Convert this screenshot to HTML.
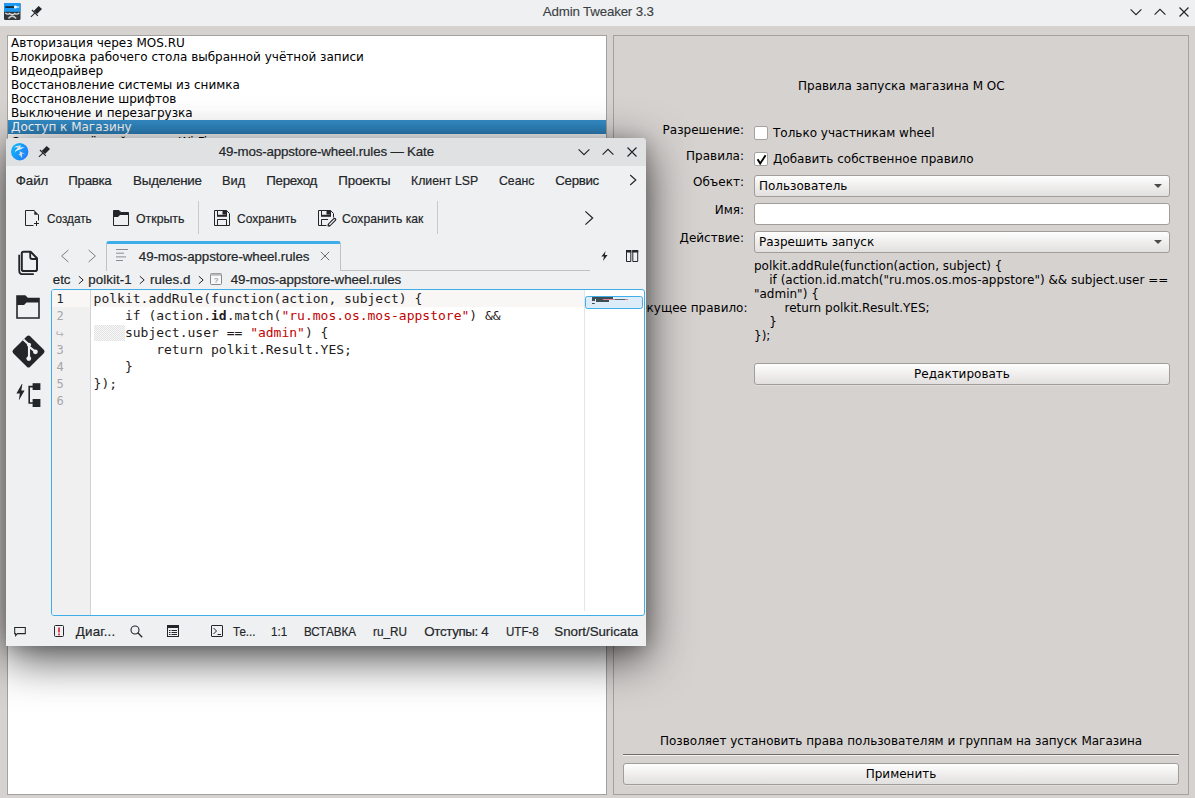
<!DOCTYPE html>
<html lang="ru"><head><meta charset="utf-8"><title>Admin Tweaker 3.3</title>
<style>
html,body{margin:0;padding:0}
body{width:1195px;height:798px;overflow:hidden;position:relative;background:#d6d2d0;font-family:"DejaVu Sans", "Liberation Sans", sans-serif;font-size:12px;line-height:14px;color:#000}
div,span{box-sizing:border-box}
.abs{position:absolute}
.k{position:absolute;white-space:nowrap;font-family:"Liberation Sans", "DejaVu Sans", sans-serif;font-size:13.33px;line-height:16px;color:#232629;-webkit-text-stroke:0.2px #232629}
.d{position:absolute;white-space:nowrap;font-family:"DejaVu Sans", "Liberation Sans", sans-serif;font-size:12px;line-height:14px;color:#000}
#mtitle{position:absolute;left:0;top:0;width:1195px;height:26px;background:#eff0f1}
#list{position:absolute;left:7px;top:35px;width:600px;height:760px;background:#fff;border:1px solid #a5a19e;overflow:hidden}
#list .row{position:absolute;left:0;width:598px;height:14px;padding-left:3px;white-space:nowrap}
#list .sel{background:linear-gradient(#358fca,#2e83bd);color:#fff}
#panel{position:absolute;left:613px;top:35px;width:576px;height:760px;border:1px solid #a5a19e}
.btn{position:absolute;height:22px;border:1px solid #a19d9a;border-radius:3px;background:linear-gradient(#fefefe,#f1f0ef 45%,#e2e0de);text-align:center;line-height:20px;box-shadow:0 1px 0 rgba(255,255,255,.25)}
.combo{position:absolute;height:22px;border:1px solid #a19d9a;border-radius:3px;background:linear-gradient(#fefefe,#f1f0ef 45%,#e2e0de);line-height:20px;padding-left:4px}
.combo:after{content:"";position:absolute;right:7px;top:8px;border-left:4px solid transparent;border-right:4px solid transparent;border-top:4px solid #4a4a4a}
.edit{position:absolute;height:22px;border:1px solid #a19d9a;border-radius:3px;background:#fff}
.chk{position:absolute;width:14px;height:14px;border:1px solid #a6a29f;border-radius:2px;background:#fff}
#kate{position:absolute;left:6px;top:138px;width:640px;height:508px;background:#eff0f1;border-radius:4px 4px 0 0;box-shadow:0 12px 46px 0 rgba(0,0,0,.72), 0 2px 16px rgba(0,0,0,.16)}
#ktitle{position:absolute;left:0;top:0;width:640px;height:28px;background:#dfe1e3;border-radius:4px 4px 0 0}
#editor{position:absolute;left:45px;top:151px;width:594px;height:327px;border:1px solid #3daee9;border-radius:3px;background:#fff;overflow:hidden}
.ln{position:absolute;left:4.5px;font-family:"DejaVu Sans Mono", "Liberation Mono", monospace;font-size:12px;line-height:17px;color:#a5a6a8}
.code{position:absolute;left:41.6px;white-space:pre;font-family:"DejaVu Sans Mono", "Liberation Mono", monospace;font-size:13px;line-height:17px;color:#1f1c1b}
.code b{font-weight:bold}
.code i{font-style:normal;color:#bf0303}
svg{position:absolute;overflow:visible}
</style></head><body>

<div id="mtitle">
<svg style="left:4px;top:3.2px" width="16.5" height="17" viewBox="0 0 16.5 17">
<rect x="0" y="0" width="16.5" height="17" rx="1.2" fill="#31363b"/>
<path d="M1.2 0 H15.3 Q16.5 0 16.5 1.2 V8.8 H0 V1.2 Q0 0 1.2 0Z" fill="#1d99f3"/>
<rect x="1.2" y="3.3" width="9" height="1.5" fill="#101418"/>
<circle cx="11.4" cy="4" r="1.5" fill="#fcfcfc"/><rect x="11.4" y="3.5" width="3.8" height="1.1" fill="#fcfcfc"/>
<path d="M1.3 9.8 Q3.2 12.2 5.6 10.4 Q8.2 12.6 10.9 10.4 Q13.3 12.2 15.2 9.8" fill="none" stroke="#dfe2e4" stroke-width="1.3"/>
<path d="M4.4 15.6 Q8.2 10.6 12.1 15.6" fill="none" stroke="#c9cdd0" stroke-width="1.6"/>
</svg>
<svg style="left:30px;top:5px" width="13" height="13" viewBox="0 0 13 13"><path d="M8.7 1.0 L12 4 L7.0 9.0 L3.7 6.0 Z" fill="#232629"/><path d="M1.9 5 L7.9 10.8 M5.4 7.6 L0.9 11.8" stroke="#232629" stroke-width="1.1" fill="none"/></svg>
<span class="k" id="k0" style="left:542.8px;top:3.9px;letter-spacing:-0.175px;color:#3a3e42;-webkit-text-stroke:0.1px #3a3e42">Admin Tweaker 3.3</span>
<svg style="left:1136px;top:12px" width="1" height="1"><path d="M-5.4 -2.7 L0 2.7 L5.4 -2.7" fill="none" stroke="#232629" stroke-width="1.15"/></svg>
<svg style="left:1160px;top:12px" width="1" height="1"><path d="M-5.4 2.7 L0 -2.7 L5.4 2.7" fill="none" stroke="#232629" stroke-width="1.15"/></svg>
<svg style="left:1184px;top:12px" width="1" height="1"><path d="M-4.5 -4.5 L4.5 4.5 M4.5 -4.5 L-4.5 4.5" fill="none" stroke="#232629" stroke-width="1.15"/></svg>
</div>
<div id="list">
<div class="row" style="top:0px">Авторизация через MOS.RU</div>
<div class="row" style="top:14px">Блокировка рабочего стола выбранной учётной записи</div>
<div class="row" style="top:28px">Видеодрайвер</div>
<div class="row" style="top:42px">Восстановление системы из снимка</div>
<div class="row" style="top:56px">Восстановление шрифтов</div>
<div class="row" style="top:70px">Выключение и перезагрузка</div>
<div class="row sel" style="top:84px">Доступ к Магазину</div>
<div class="row" style="top:99px">Создание учётной записи Wi-Fi</div>
</div>
<div id="panel"></div>
<div class="d" style="left:798px;top:79px;">Правила запуска магазина М ОС</div>
<div class="d" style="right:451px;top:123px;">Разрешение:</div>
<div class="d" style="right:451px;top:149px;">Правила:</div>
<div class="d" style="right:451px;top:175px;">Объект:</div>
<div class="d" style="right:451px;top:203px;">Имя:</div>
<div class="d" style="right:451px;top:231px;">Действие:</div>
<div class="d" style="right:447.5px;top:301px;">Текущее правило:</div>
<div class="chk" style="left:754px;top:126px"></div>
<div class="d" style="left:773px;top:126px;">Только участникам wheel</div>
<div class="chk" style="left:754px;top:152px"><svg style="left:1px;top:1px" width="11" height="11" viewBox="0 0 11 11"><path d="M1.6 5.2 L4.2 9.4 L9.6 1.2" fill="none" stroke="#000" stroke-width="1.9"/></svg></div>
<div class="d" style="left:773px;top:152px;">Добавить собственное правило</div>
<div class="combo" style="left:754px;top:175px;width:416px">Пользователь</div>
<div class="edit" style="left:754px;top:203px;width:416px"></div>
<div class="combo" style="left:754px;top:231px;width:416px">Разрешить запуск</div>
<div class="d" style="left:754px;top:259px;white-space:pre">polkit.addRule(function(action, subject) {
    if (action.id.match("ru.mos.os.mos-appstore") &amp;&amp; subject.user ==
"admin") {
        return polkit.Result.YES;
    }
});</div>
<div class="btn" style="left:754px;top:363px;width:416px">Редактировать</div>
<div class="d" style="left:660px;top:734px;">Позволяет установить права пользователям и группам на запуск Магазина</div>
<div class="abs" style="left:623px;top:754px;width:556px;height:1px;background:#6f6c6a"></div>
<div class="abs" style="left:623px;top:755px;width:556px;height:1px;background:#f4f2f1"></div>
<div class="btn" style="left:623px;top:763px;width:556px">Применить</div>
<div id="kate">
<div id="ktitle"></div>
<svg style="left:5.050000000000001px;top:5.199999999999989px" width="17.4" height="17.4" viewBox="0 0 17.4 17.4">
<defs><linearGradient id="kg" x1="0" y1="0.2" x2="1" y2="0.8"><stop offset="0" stop-color="#0cb8f9"/><stop offset="1" stop-color="#2179fb"/></linearGradient></defs>
<circle cx="8.7" cy="8.7" r="8.7" fill="url(#kg)"/>
<path d="M2.7 4.2 Q6 2.2 10.1 2.4 L8.8 4.4 L13.7 4.1 Q9.5 6.9 5.8 7.7 Q4.4 8.4 3.8 9.7 Q3.5 7.4 6.4 5.6 Q7 4.7 7 4.3 Z" fill="#eef1f3"/>
<path d="M6.2 3.4 L8.6 3.2 L7.8 5 L6.6 5.4 Z" fill="#c9cdd1"/>
<path d="M8.6 8.0 L14.6 11.4 L11 10.6 L11.2 15.2 L9.2 12.4 L7.4 11.8 L9 10.6 Z" fill="#d9dde0"/>
</svg>
<svg style="left:32.3px;top:7.099999999999994px" width="13" height="13" viewBox="0 0 13 13"><path d="M8.7 1.0 L12 4 L7.0 9.0 L3.7 6.0 Z" fill="#232629"/><path d="M1.9 5 L7.9 10.8 M5.4 7.6 L0.9 11.8" stroke="#232629" stroke-width="1.1" fill="none"/></svg>
<span class="k" id="k1" style="left:212.8px;top:6.0px;letter-spacing:-0.167px;">49-mos-appstore-wheel.rules — Kate</span>
<svg style="left:578px;top:14px" width="1" height="1"><path d="M-5.4 -2.7 L0 2.7 L5.4 -2.7" fill="none" stroke="#232629" stroke-width="1.15"/></svg>
<svg style="left:602px;top:14px" width="1" height="1"><path d="M-5.4 2.7 L0 -2.7 L5.4 2.7" fill="none" stroke="#232629" stroke-width="1.15"/></svg>
<svg style="left:626px;top:14px" width="1" height="1"><path d="M-4.5 -4.5 L4.5 4.5 M4.5 -4.5 L-4.5 4.5" fill="none" stroke="#232629" stroke-width="1.15"/></svg>
<span class="k" id="k2" style="left:9.8px;top:35.0px;letter-spacing:-0.100px;">Файл</span>
<span class="k" id="k3" style="left:62.3px;top:35.0px;letter-spacing:-0.320px;">Правка</span>
<span class="k" id="k4" style="left:127.1px;top:35.0px;letter-spacing:-0.213px;">Выделение</span>
<span class="k" id="k5" style="left:216.3px;top:35.0px;transform:scaleX(0.957);transform-origin:0 0;">Вид</span>
<span class="k" id="k6" style="left:260.3px;top:35.0px;letter-spacing:-0.317px;">Переход</span>
<span class="k" id="k7" style="left:332.3px;top:35.0px;letter-spacing:-0.183px;">Проекты</span>
<span class="k" id="k8" style="left:405.3px;top:35.0px;transform:scaleX(0.923);transform-origin:0 0;">Клиент LSP</span>
<span class="k" id="k9" style="left:493.4px;top:35.0px;transform:scaleX(0.919);transform-origin:0 0;">Сеанс</span>
<span class="k" id="k10" style="left:549.3px;top:35.0px;letter-spacing:-0.340px;">Сервис</span>
<svg style="left:626.6px;top:42px" width="1" height="1"><path d="M-2.8 -5 L2.8 0 L-2.8 5" fill="none" stroke="#232629" stroke-width="1.15"/></svg>
<svg style="left:18px;top:72px" width="16" height="16" viewBox="0 0 16 16"><path d="M10.5 0.5 H1.5 V15.5 H9.5 M14.5 4.5 V10.5" fill="none" stroke="#232629" stroke-width="1"/><path d="M10.3 0.3 V4.7 H14.7 Z" fill="#232629"/><path d="M12.5 11 V16 M10 13.5 H15" stroke="#232629" stroke-width="1" fill="none"/></svg>
<span class="k" id="k11" style="left:40.8px;top:73.0px;transform:scaleX(0.882);transform-origin:0 0;">Создать</span>
<svg style="left:107px;top:72px" width="16" height="16" viewBox="0 0 16 16"><path d="M0.5 0.5 H6 L8 2.5 H15.5 V15.5 H0.5 Z" fill="none" stroke="#232629"/><path d="M0.5 0.5 H6 L8 2.5 H15.5 V5 H7 L5 7 H0.5 Z" fill="#232629"/></svg>
<span class="k" id="k12" style="left:129.8px;top:73.0px;transform:scaleX(0.925);transform-origin:0 0;">Открыть</span>
<div class="abs" style="left:192px;top:63px;width:1px;height:33px;background:#c8cacc"></div>
<svg style="left:208px;top:72px" width="16" height="16" viewBox="0 0 16 16"><path d="M0.5 0.5 H12.5 L15.5 3.5 V15.5 H0.5 Z" fill="none" stroke="#232629"/><path d="M3.5 0.5 V6 M12.5 0.5 V6" fill="none" stroke="#232629"/><rect x="3" y="4.8" width="10" height="2" fill="#232629"/><rect x="8.5" y="1" width="4" height="3.6" fill="#232629"/><path d="M3.5 15.5 V9.5 H12.5 V15.5" fill="none" stroke="#232629"/></svg>
<span class="k" id="k13" style="left:231.2px;top:73.0px;transform:scaleX(0.898);transform-origin:0 0;">Сохранить</span>
<svg style="left:312px;top:72px" width="17" height="16" viewBox="0 0 17 16"><path d="M8.5 15.5 H0.5 V0.5 H12.5 L15.5 3.5 V7.5" fill="none" stroke="#232629"/><path d="M3.5 0.5 V6 M12.5 0.5 V6" fill="none" stroke="#232629"/><rect x="3" y="4.8" width="10" height="2" fill="#232629"/><rect x="8.5" y="1" width="4" height="3.6" fill="#232629"/><path d="M3.5 15.5 V9.5 H10" fill="none" stroke="#232629"/><path d="M11.2 14.9 L16.6 9.5" stroke="#232629" stroke-width="3.4" stroke-linecap="round"/><path d="M11.6 14.5 L16.5 9.6" stroke="#eff0f1" stroke-width="1.3" stroke-linecap="round"/><path d="M9.6 16.4 L10.2 14 L12 15.8 Z" fill="#232629"/></svg>
<span class="k" id="k14" style="left:336.1px;top:73.0px;transform:scaleX(0.910);transform-origin:0 0;">Сохранить как</span>
<div class="abs" style="left:431px;top:63px;width:1px;height:33px;background:#c8cacc"></div>
<svg style="left:583.3px;top:80px" width="1" height="1"><path d="M-3.6 -6.6 L3.6 0 L-3.6 6.6" fill="none" stroke="#232629" stroke-width="1.25"/></svg>
<svg style="left:12px;top:113px" width="22" height="25" viewBox="0 0 22 25"><path d="M5.6 0.8 H12.6 L19 7.2 V18.2 Q19 20 17.2 20 H5.6 Q3.8 20 3.8 18.2 V2.6 Q3.8 0.8 5.6 0.8 Z" fill="none" stroke="#232629" stroke-width="2" stroke-linejoin="round"/><path d="M12.2 0.8 V6 Q12.2 8 14.2 8 H19" fill="none" stroke="#232629" stroke-width="1.8"/><path d="M1.2 3.8 V19.4 Q1.2 23.2 5 23.2 H15.8" fill="none" stroke="#232629" stroke-width="1.8"/></svg>
<svg style="left:10px;top:157px" width="24" height="24" viewBox="0 0 24 24"><path d="M1 1 H9 L11.5 3.5 H23 V23 H1 Z" fill="none" stroke="#232629" stroke-width="1.6"/><path d="M1 1 H9 L11.5 3.5 H23 V7.5 H10.5 L8 10 H1 Z" fill="#232629"/></svg>
<svg style="left:5.85px;top:196.5px" width="33" height="33" viewBox="0 0 33 33"><rect x="4.5" y="4.5" width="24" height="24" rx="2.4" transform="rotate(45 16.5 16.5)" fill="#232629"/><path d="M11.4 4.6 L17 9.8 V23.4 M17 11.6 L23.2 16.6" stroke="#eff0f1" stroke-width="2.1" fill="none"/><circle cx="17" cy="9.8" r="2.1" fill="#eff0f1"/><circle cx="16.8" cy="23.6" r="2.4" fill="#eff0f1"/><circle cx="23.4" cy="16.8" r="2.4" fill="#eff0f1"/></svg>
<svg style="left:11px;top:244px" width="24" height="26" viewBox="0 0 24 26"><path d="M4.8 2.1 L-0.6 11.6 H2.8 L1.8 18.6 L7.6 8.4 H4.3 L5.4 2.1 Z" fill="#232629"/><rect x="15.6" y="1.2" width="7.8" height="6.8" fill="#232629"/><rect x="15.6" y="17" width="7.8" height="8" fill="#232629"/><path d="M16 4.6 H12.2 V21 H16" fill="none" stroke="#232629" stroke-width="1.6"/></svg>
<svg style="left:58.5px;top:118px" width="1" height="1"><path d="M3.4 -6 L-3.4 0 L3.4 6" fill="none" stroke="#7a7d80" stroke-width="1.0"/></svg>
<svg style="left:86px;top:118px" width="1" height="1"><path d="M-3.4 -6 L3.4 0 L-3.4 6" fill="none" stroke="#7a7d80" stroke-width="1.0"/></svg>
<div class="abs" style="left:100px;top:132px;width:484px;height:1px;background:#bfc1c3"></div>
<div class="abs" style="left:100px;top:103px;width:235px;height:30px;background:#eff0f1;border:1px solid #bfc1c3;border-bottom:none;border-top:3px solid #3daee9;border-radius:3px 3px 0 0"></div>
<svg style="left:110px;top:111px" width="12" height="12" viewBox="0 0 12 12"><path d="M0 0.5h12M0 4.2h8M0 7.9h10M0 11.5h7" stroke="#8a8d90" stroke-width="1"/></svg>
<span class="k" id="k15" style="left:132.8px;top:110.5px;letter-spacing:-0.077px;">49-mos-appstore-wheel.rules</span>
<svg style="left:319px;top:118px" width="1" height="1"><path d="M-4.2 -4.2 L4.2 4.2 M4.2 -4.2 L-4.2 4.2" fill="none" stroke="#6b6e71" stroke-width="1.0"/></svg>
<svg style="left:595px;top:113px" width="7" height="10" viewBox="0 0 7 10"><path d="M4.6 0 L0.4 5.6 H3 L2 10 L6.6 4 H3.8 Z" fill="#232629"/></svg>
<svg style="left:620px;top:112px" width="12" height="12" viewBox="0 0 12 12"><path d="M0.5 0.5 H4.8 V11.5 H0.5 Z M6.8 0.5 H11.7 V11.5 H6.8 Z" fill="none" stroke="#232629"/><rect x="0" y="0" width="5.3" height="2.5" fill="#232629"/><rect x="6.3" y="0" width="5.9" height="2.5" fill="#232629"/></svg>
<span class="k" id="k16" style="left:46.8px;top:133.5px;letter-spacing:-0.050px;">etc</span>
<svg style="left:74.5px;top:141.5px" width="1" height="1"><path d="M-2.2 -3.8 L2.2 0 L-2.2 3.8" fill="none" stroke="#232629" stroke-width="1.0"/></svg>
<span class="k" id="k17" style="left:82.3px;top:133.5px;letter-spacing:0.043px;">polkit-1</span>
<svg style="left:136px;top:141.5px" width="1" height="1"><path d="M-2.2 -3.8 L2.2 0 L-2.2 3.8" fill="none" stroke="#232629" stroke-width="1.0"/></svg>
<span class="k" id="k18" style="left:144.1px;top:133.5px;letter-spacing:0.050px;">rules.d</span>
<svg style="left:194.5px;top:141.5px" width="1" height="1"><path d="M-2.2 -3.8 L2.2 0 L-2.2 3.8" fill="none" stroke="#232629" stroke-width="1.0"/></svg>
<svg style="left:204px;top:135px" width="12" height="12" viewBox="0 0 12 12"><rect x="0.5" y="0.5" width="11" height="11" rx="1" fill="#f7f8f8" stroke="#85888b"/><rect x="0.5" y="0.5" width="11" height="2.2" fill="#b4b7b9"/><text x="6" y="10" font-size="7.5" text-anchor="middle" fill="#6d7074" font-family="Liberation Sans, sans-serif">?</text></svg>
<span class="k" id="k19" style="left:224.8px;top:133.5px;letter-spacing:-0.085px;">49-mos-appstore-wheel.rules</span>
<div id="editor">
<div class="abs" style="left:0;top:0;width:38px;height:325px;background:#f0f0f0"></div>
<div class="abs" style="left:38px;top:0;width:1px;height:325px;background:#d2d3d4"></div>
<div class="abs" style="left:0;top:0;width:38px;height:17px;background:#f8f7f6"></div>
<div class="abs" style="left:39px;top:0;width:493px;height:17px;background:#f8f7f6"></div>
<div class="abs" style="left:532px;top:0;width:1px;height:321px;background:#e4e5e6"></div>
<div class="ln" style="top:1px;color:#232629">1</div>
<div class="ln" style="top:18px;">2</div>
<div class="ln" style="top:35px;font-size:13px;left:4px;color:#b4b5b7">↪</div>
<div class="ln" style="top:52px;">3</div>
<div class="ln" style="top:69px;">4</div>
<div class="ln" style="top:86px;">5</div>
<div class="ln" style="top:103px;">6</div>
<div class="code" style="top:0px">polkit.addRule(function(action, subject) {</div>
<div class="code" style="top:17px">    if (action.<b>id</b>.match(<i>"ru.mos.os.mos-appstore"</i>) &amp;&amp;</div>
<div class="code" style="top:34px">    subject.user == <i>"admin"</i>) {</div>
<div class="code" style="top:51px">        return polkit.Result.YES;</div>
<div class="code" style="top:68px">    }</div>
<div class="code" style="top:85px">});</div>
<div class="abs" style="left:42px;top:35px;width:31px;height:16px;background:repeating-conic-gradient(#e2e2e2 0% 25%,#f8f8f8 0% 50%) 0 0/2px 2px"></div>
<div class="abs" style="left:533px;top:6px;width:58px;height:13px;border:1px solid #3daee9;border-radius:2.5px;background:#dcedf9"></div>
<div class="abs" style="left:540px;top:7px;width:21px;height:2px;background:#3f4d55"></div>
<div class="abs" style="left:544px;top:9px;width:13px;height:2.5px;background:#3f4d55"></div>
<div class="abs" style="left:551px;top:9.3px;width:12px;height:1px;background:#d9848c"></div>
<div class="abs" style="left:563px;top:9.3px;width:10px;height:1px;background:#56646c"></div>
<div class="abs" style="left:573px;top:9.3px;width:3px;height:1px;background:#d9848c"></div>
<div class="abs" style="left:540px;top:9px;width:2.5px;height:2px;background:#3f4d55"></div>
<div class="abs" style="left:540px;top:12.5px;width:3px;height:1.8px;background:#3f4d55;border-radius:0 0 1.5px 0"></div>
</div>
<svg style="left:8px;top:487px" width="13" height="12" viewBox="0 0 13 12"><path d="M0.7 2.5 H11.3 V8.6 H3.4 L1.6 10.6 V8.6 H0.7 Z" fill="none" stroke="#232629" stroke-width="1.05"/></svg>
<svg style="left:48px;top:485px" width="10" height="16" viewBox="0 0 10 16"><rect x="0.5" y="2.5" width="9" height="11" rx="1" fill="none" stroke="#232629"/><rect x="4" y="4.5" width="2" height="5" fill="#da4453"/><rect x="4" y="10.5" width="2" height="1.8" fill="#da4453"/></svg>
<span class="k" id="k20" style="left:69.8px;top:486.0px;letter-spacing:0.200px;">Диаг...</span>
<svg style="left:124px;top:487px" width="13" height="13" viewBox="0 0 13 13"><circle cx="5" cy="5" r="4" fill="none" stroke="#232629" stroke-width="1.1"/><path d="M7.8 7.8 L12.2 12.2" stroke="#232629" stroke-width="1.3"/></svg>
<svg style="left:161px;top:487px" width="12" height="12" viewBox="0 0 12 12"><rect x="0.5" y="0.5" width="11" height="11" fill="none" stroke="#232629"/><rect x="0" y="0" width="12" height="3" fill="#232629"/><path d="M2 5.5h1.5M4.5 5.5H10M2 7.5h1.5M4.5 7.5H10M2 9.5h1.5M4.5 9.5H10" stroke="#232629"/></svg>
<svg style="left:205px;top:487px" width="12" height="12" viewBox="0 0 12 12"><rect x="0.5" y="0.5" width="11" height="11" rx="0.5" fill="none" stroke="#232629"/><path d="M2.5 3 L5.5 6 L2.5 9" fill="none" stroke="#232629"/><path d="M6.5 9.5 H10" stroke="#232629"/></svg>
<span class="k" id="k21" style="left:226.7px;top:486.0px;transform:scaleX(0.868);transform-origin:0 0;">Те...</span>
<span class="k" id="k22" style="left:264.5px;top:486.0px;transform:scaleX(0.871);transform-origin:0 0;">1:1</span>
<span class="k" id="k23" style="left:298.2px;top:486.0px;transform:scaleX(0.871);transform-origin:0 0;">ВСТАВКА</span>
<span class="k" id="k24" style="left:367.4px;top:486.0px;transform:scaleX(0.881);transform-origin:0 0;">ru_RU</span>
<span class="k" id="k25" style="left:418.3px;top:486.0px;letter-spacing:-0.344px;">Отступы: 4</span>
<span class="k" id="k26" style="left:500.1px;top:486.0px;transform:scaleX(0.869);transform-origin:0 0;">UTF-8</span>
<span class="k" id="k27" style="left:548.3px;top:486.0px;letter-spacing:-0.038px;">Snort/Suricata</span>
</div>
</body></html>
